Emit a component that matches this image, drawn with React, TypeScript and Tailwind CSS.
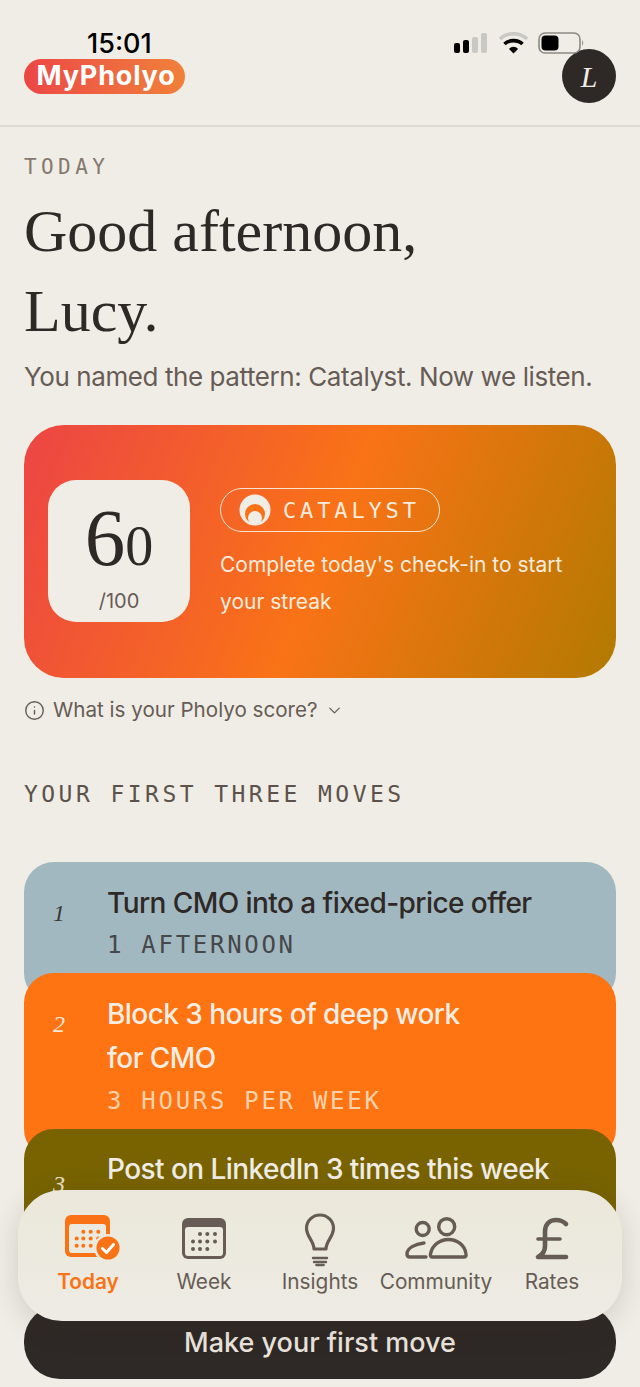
import React from "react";
import { ChevronDown, Info } from "lucide-react";

const MONO = "font-['DejaVu_Sans_Mono',monospace]";
const SERIF = "font-['Liberation_Serif',serif]";

function Dots({ rows, fill }: { rows: number[][]; fill: string }) {
  return (
    <>
      {rows.map((p, i) => (
        <circle key={i} cx={p[0]} cy={p[1]} r={2} fill={fill} />
      ))}
    </>
  );
}

function TodayIcon() {
  const r = [
    [18.3, 16.7], [25.7, 16.7], [33.3, 16.7],
    [11.7, 23.5], [18.3, 23.5], [25.7, 23.5], [33.3, 23.5],
    [11.7, 30.7], [18.3, 30.7], [25.7, 30.7],
  ];
  return (
    <svg width="62" height="50" viewBox="0 0 62 50" className="overflow-visible">
      <g transform="translate(8 5)">
        <rect x="0" y="0" width="45" height="42" rx="6" fill="#f97316" />
        <rect x="4" y="9" width="37" height="29" rx="3" fill="#ece9df" />
        <Dots rows={r} fill="#f97316" />
        <circle cx="43" cy="33" r="14" fill="#ebe8dd" />
        <circle cx="43" cy="33" r="11.5" fill="#f97316" />
        <path d="M37.5 33.5 L41.5 37.5 L48.5 29.5" fill="none" stroke="#fff" strokeWidth="3" strokeLinecap="round" strokeLinejoin="round" />
      </g>
    </svg>
  );
}

function WeekIcon() {
  const r = [
    [18, 16], [25.3, 16], [33, 16],
    [11, 23.5], [18, 23.5], [25.3, 23.5], [33, 23.5],
    [11, 31], [18, 31], [25.3, 31],
  ];
  return (
    <svg width="44" height="50" viewBox="0 0 44 50" className="overflow-visible">
      <g transform="translate(0 8)">
        <rect x="0" y="0" width="44" height="41" rx="6" fill="#665c55" />
        <rect x="3" y="9" width="38" height="29" rx="3" fill="#ece9df" />
        <Dots rows={r} fill="#665c55" />
      </g>
    </svg>
  );
}

function BulbIcon() {
  return (
    <svg width="32" height="50" viewBox="0 -3 32 50" fill="none" stroke="#665c55" strokeLinecap="round" className="overflow-visible">
      <path d="M10 36 C10 28 2.500 24 2.500 15 A13.500 13 0 0 1 29.500 15 C29.500 24 22 28 22 36 Z" strokeWidth="3.2" strokeLinejoin="round" />
      <path d="M9 45 H23" strokeWidth="2.4" />
      <path d="M10 49 H22" strokeWidth="2.4" />
      <path d="M12.5 52 H19.5" strokeWidth="2.6" />
    </svg>
  );
}

function CommunityIcon() {
  return (
    <svg width="64" height="50" viewBox="0 0 64 50" fill="none" stroke="#665c55" strokeWidth="3.4" strokeLinecap="round" strokeLinejoin="round" className="overflow-visible">
      <g transform="translate(0 6)">
        <circle cx="18.7" cy="13" r="6.5" />
        <circle cx="42.7" cy="10.7" r="8" />
        <path d="M28.5 41 Q26 41 26.5 38 C28 29 36 23.5 44.5 23.5 C53 23.5 61 29 62 38 Q62.5 41 60 41 Z" />
        <path d="M20 27 C11 28 3 32 3 38 Q3 41 6 41 H22" />
      </g>
    </svg>
  );
}

function PoundIcon() {
  return (
    <svg width="36" height="50" viewBox="0 0 36 50" fill="none" stroke="#665c55" strokeWidth="4.6" strokeLinecap="round" strokeLinejoin="round" className="overflow-visible">
      <g transform="translate(1 8)">
        <path d="M31 6 C28 3 25 2 21 2 C14 2 10 7 10 14 V28 C10 33 7 37 3 39 H31" />
        <path d="M3 21 H25" strokeWidth="3.6" />
      </g>
    </svg>
  );
}

function StatusBar() {
  return (
    <>
      <div className="absolute left-[87px] top-[28px] text-[27px] leading-[32px] font-medium text-black">15:01</div>
      <svg className="absolute left-[452px] top-[30px]" width="134" height="26" viewBox="0 0 134 26">
        <rect x="2" y="13" width="6" height="10" rx="2" fill="#000" />
        <rect x="11" y="10" width="6" height="13" rx="2" fill="#000" />
        <rect x="20" y="7" width="6" height="16" rx="2" fill="#c8c8c4" />
        <rect x="29" y="3" width="6" height="20" rx="2" fill="#c8c8c4" />
        <path d="M48 9 C55 2 68 2 75 9" fill="none" stroke="#c8c8c4" strokeWidth="3.6" />
        <path d="M52.5 14 C57 9.500 66 9.500 70.500 14" fill="none" stroke="#000" strokeWidth="3.6" />
        <path d="M57 19 C59.500 16 63.500 16 66 19 L61.500 23.500 Z" fill="#000" />
        <rect x="87" y="3" width="41" height="20" rx="6" fill="none" stroke="#8a8a86" strokeWidth="1.6" />
        <rect x="89.500" y="5.500" width="17" height="15" rx="4" fill="#000" />
        <path d="M130 10 Q132.500 13 130 16 Z" fill="#9a9a96" />
      </svg>
    </>
  );
}

function Move({ n, numPt, title, meta, bg, numC, titleC, metaC }: { n: string; numPt: string; title: React.ReactNode; meta: string; bg: string; numC: string; titleC: string; metaC: string }) {
  return (
    <div className={`relative -mb-[30px] flex rounded-[30px] pt-[18.6px] pb-[40.6px] pl-[29px] pr-[24px] ${bg}`}>
      <div className={`w-[55px] shrink-0 -mr-[1px] text-[24px] italic leading-[32px] ${numPt} ${SERIF} ${numC}`}>{n}</div>
      <div>
        <div className={`text-[28px] leading-[44.8px] font-medium tracking-[-0.02em] ${titleC}`}>{title}</div>
        <div className={`mt-[2px] -mb-[1px] text-[24px] leading-[36px] tracking-[0.113em] ${MONO} ${metaC}`}>{meta}</div>
      </div>
    </div>
  );
}

function Tab({ icon, label, active }: { icon: React.ReactNode; label: string; active?: boolean }) {
  return (
    <div className="flex w-[116px] flex-col items-center">
      <div className="flex h-[50px] items-center justify-center">{icon}</div>
      <div className={`mt-[8px] whitespace-nowrap text-[20.8px] leading-[28px] ${active ? "font-semibold text-[#f97316]" : "text-[#665c55]"}`}>{label}</div>
    </div>
  );
}

export default function App() {
  return (
    <div className="relative h-[1387px] w-[640px] overflow-hidden bg-[#f0ede6] font-['Inter',sans-serif] text-[#2e2826]">
      <header className="flex h-[127px] items-center justify-between border-b-2 border-[#dfdcd4] px-[24px] pt-[27px]">
        <div className="flex h-[35px] w-[161px] items-center justify-center rounded-full bg-gradient-to-r from-[#ec4545] to-[#f0803a] pl-[3px] text-[27px] font-bold tracking-[0.03em] text-white">
          MyPholyo
        </div>
        <div className={`flex h-[54px] w-[54px] items-center justify-center rounded-full bg-[#2e2826] text-[30px] italic text-[#f0ede6] ${SERIF}`}>L</div>
      </header>
      <StatusBar />

      <main className="px-[24px]">
        <div className={`mt-[26px] text-[21px] leading-[28px] tracking-[0.21em] text-[#85796f] ${MONO}`}>TODAY</div>
        <h1 className={`mt-[10px] text-[60px] font-normal leading-[80px] ${SERIF}`}>
          Good afternoon,
          <br />
          Lucy.
        </h1>
        <p className="mt-[6px] whitespace-nowrap text-[26px] leading-[40px] tracking-[-0.016em] text-[#665c55]">
          You named the pattern: Catalyst. Now we listen.
        </p>

        <section className="mt-[28px] flex h-[253px] items-center gap-[30px] rounded-[40px] bg-[linear-gradient(112deg,#ec4545_0%,#f97316_51%,#b27a00_100%)] px-[24px] pb-[1px]">
          <div className="flex h-[142px] w-[142px] shrink-0 flex-col items-center rounded-[28px] bg-[#f0ede6] pt-[18px]">
            <div className={`h-[80px] text-[81px] leading-[80px] ${SERIF}`}>
              6<span className="text-[56px] leading-none">0</span>
            </div>
            <div className="mt-[10px] text-[20px] leading-[26px] text-[#665c55]">/100</div>
          </div>
          <div className="mt-[6px] min-w-0 flex-1">
            <div className="flex h-[44px] w-[220px] items-center gap-[12px] rounded-full border-[1.5px] border-[#f7e4d0] pl-[18px]">
              <svg width="32" height="32" viewBox="0 0 32 32">
                <circle cx="16" cy="16" r="15.500" fill="#f0ede6" />
                <circle cx="16" cy="20" r="10" fill="#f97316" />
                <circle cx="16" cy="24" r="7" fill="#f0ede6" />
              </svg>
              <span className={`pt-[2px] text-[22px] leading-[28px] tracking-[0.175em] text-[#f7ecdf] ${MONO}`}>CATALYST</span>
            </div>
            <p className="mt-[14px] text-[21px] leading-[37px] text-[#f7ecdf]">
              Complete today's check-in to start
              <br />
              your streak
            </p>
          </div>
        </section>

        <div className="mt-[16px] flex h-[32px] items-center text-[20.6px] text-[#665c55]">
          <Info size={21} strokeWidth={1.6} className="mr-[8px]" />
          <span>What is your Pholyo score?</span>
          <ChevronDown size={19} strokeWidth={1.6} className="ml-[8px]" />
        </div>

        <h2 className={`mt-[52px] text-[23px] font-normal leading-[32px] tracking-[0.15em] text-[#5c524b] ${MONO}`}>YOUR FIRST THREE MOVES</h2>

        <div className="mt-[52px]">
          <Move n="1" numPt="pt-[16px]" title="Turn CMO into a fixed-price offer" meta="1 AFTERNOON" bg="bg-[#a2b8c0]" numC="text-[#3a3a3a]" titleC="text-[#2e2826]" metaC="text-[#45474a]" />
          <Move n="2" numPt="pt-[16px]" title={<>Block 3 hours of deep work<br />for CMO</>} meta="3 HOURS PER WEEK" bg="bg-[#fe7312]" numC="text-[#f7e7d6]" titleC="text-[#f7ede2]" metaC="text-[#fbd2ac]" />
          <Move n="3" numPt="pt-[21px]" title="Post on LinkedIn 3 times this week" meta="3 POSTS" bg="bg-[#786300]" numC="text-[#e8e0c8]" titleC="text-[#f0ede6]" metaC="text-[#e8e0c8]" />
        </div>
      </main>

      <div className="absolute inset-x-0 bottom-[8px] flex flex-col items-center">
        <nav className="relative z-10 flex h-[131px] w-[604px] items-start justify-center rounded-[44px] bg-[linear-gradient(180deg,#ebe8da_0%,#edebe4_100%)] pt-[20px] shadow-[0_6px_28px_rgba(60,50,40,0.18)]">
          <Tab icon={<TodayIcon />} label="Today" active />
          <Tab icon={<WeekIcon />} label="Week" />
          <Tab icon={<BulbIcon />} label="Insights" />
          <Tab icon={<CommunityIcon />} label="Community" />
          <Tab icon={<PoundIcon />} label="Rates" />
        </nav>
        <button className="-mt-[16px] flex h-[74px] w-[592px] items-center justify-center rounded-[36px] bg-[#2e2826] pt-[2px] text-[27px] font-medium text-[#ebe4dd]">
          Make your first move
        </button>
      </div>
    </div>
  );
}
